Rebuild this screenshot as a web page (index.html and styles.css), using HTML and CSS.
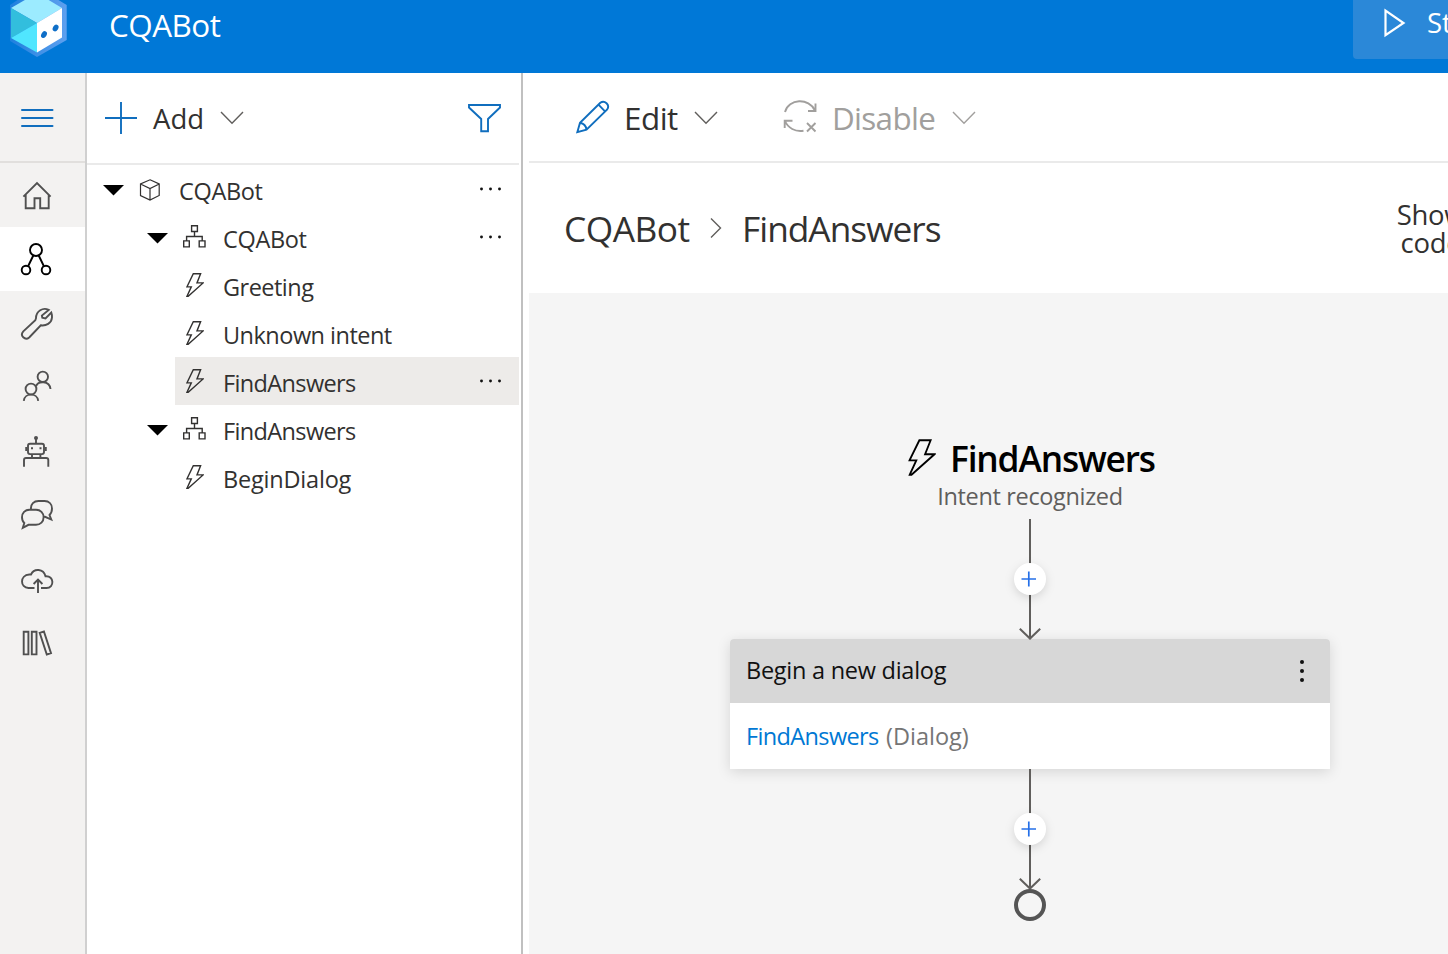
FILE: index.html
```html
<!DOCTYPE html>
<html lang="en">
<head>
<meta charset="utf-8">
<title>CQABot</title>
<link rel="stylesheet" href="styles.css">
</head>
<body>
<svg class="defs" width="0" height="0" aria-hidden="true">
  <symbol id="bolt" viewBox="0 0 18 24"><path d="M7.3 .8H14.6L11 9.900H17.100L2.200 23.200H1L5.300 13.900H.9Z"/></symbol>
  <symbol id="tree" viewBox="0 0 23 23"><path d="M8.6.7h5.8v5.8H8.6zM.7 15.9h5.6v6H.7zM16.2 15.9h5.8v6h-5.8zM11.500 6.500v5M3.600 15.900v-4.400h15.600v4.400"/></symbol>
  <symbol id="caret" viewBox="0 0 21 11"><path d="M0 0H21L10.500 10.500Z"/></symbol>
  <symbol id="chevron" viewBox="0 0 24 14"><path d="M1 1L12 12.300L23 1"/></symbol>
  <symbol id="dots" viewBox="0 0 24 4"><circle cx="2.500" cy="2" r="1.450"/><circle cx="11.500" cy="2" r="1.450"/><circle cx="20.500" cy="2" r="1.450"/></symbol>
</svg>

<header class="topbar">
  <svg class="logo" width="109" height="73" viewBox="0 0 109 73">
    <defs><linearGradient id="edge" x1="0" x2="1"><stop offset="0" stop-color="#1f80de"/><stop offset="1" stop-color="#5ea0ef"/></linearGradient></defs>
    <path fill="url(#edge)" d="M37-13L66.700 5V40L37 57L10 41V5Z"/>
    <path fill="#9cebff" d="M11 8L37-7L62 8L37 23Z"/>
    <path fill="#32bedd" d="M11 8L37 23L11 38Z"/>
    <path fill="#50e6ff" d="M11 38L37 23V52.500Z"/>
    <path fill="#fff" d="M37 23L62 8V37.500L37 52.500Z"/>
    <g fill="#0f6fc8"><ellipse cx="44" cy="34.600" rx="2.600" ry="3.600" transform="rotate(32 44 34.600)"/><ellipse cx="55.600" cy="28" rx="2.600" ry="3.600" transform="rotate(32 55.600 28)"/></g>
  </svg>
  <div class="brand">CQABot</div>
  <div class="start">
    <svg width="74" height="59" viewBox="1353 0 74 59"><path d="M1385.500 10.700V35.200L1403.500 23Z"/></svg>
    <span>Start bot</span>
  </div>
</header>

<div class="workspace">
  <nav class="rail">
    <div class="menu"><svg width="85" height="88" viewBox="0 73 85 88"><path d="M22 110H52.500M22 118H52.500M22 126H52.500"/></svg></div>
    <div class="item"><svg width="85" height="64" viewBox="0 163 85 64"><path d="M23.400 196.700L37 183.200L50.600 196.700M25.700 194.800V208.200H34.500V198.300H40.200V208.200H48.700V194.800"/></svg></div>
    <div class="item active"><svg width="85" height="64" viewBox="0 227 85 64"><circle cx="36" cy="250" r="6"/><circle cx="26" cy="270" r="4.300"/><circle cx="46" cy="270" r="4.300"/><path d="M33.300 255.500L28.200 266M38.700 255.500L43.800 266"/></svg></div>
    <div class="item"><svg width="85" height="64" viewBox="0 291 85 64"><path d="M48.700 309.900C43 307 36 311 36 318.200L35.300 320.300L23.300 331.300C19.500 335.500 25 341 29.200 337.500L40.800 325.300C46 326 51.500 323.500 52 317.500C52.200 315.500 51.800 314 51.300 312.600L45.500 318.400L42.300 317.700L41.900 315.600Z"/></svg></div>
    <div class="item"><svg width="85" height="64" viewBox="0 355 85 64"><circle cx="42.800" cy="376.800" r="5.200"/><circle cx="31" cy="389" r="5.400"/><path d="M23.800 400.800C24.500 392.500 37.500 392.500 38.200 400.800M36 386.300C38 380.500 49.500 380.500 50.500 389"/></svg></div>
    <div class="item"><svg width="85" height="64" viewBox="0 419 85 64"><circle class="fill" cx="36" cy="438" r="2"/><rect x="28" y="443.800" width="16" height="10.300" rx="2"/><path d="M36 438V443.500M26.200 447V451M45.800 447V451M32 454V457.500M40.400 454V457.500M24 466.700V460Q24 458 26 458H46.200Q48.300 458 48.300 460V466.700"/><path d="M31 448.200h2M39.500 448.200h2"/></svg></div>
    <div class="item"><svg width="85" height="64" viewBox="0 483 85 64"><path d="M31 509C30.500 504 34 501 38.500 501H44.500C49 501 52 504 52 508.500C52 511.500 50.800 513.800 49.500 515L51.300 519.500L45 516.800H43.500M29.500 509.800H36C40.500 509.800 43.600 513 43.600 517.300C43.600 521.600 40.500 524.800 36 524.800H28.500L22.800 527.800L24.300 523C22.800 521.800 22 519.500 22 517.300C22 513 25 509.800 29.500 509.800Z"/></svg></div>
    <div class="item"><svg width="85" height="64" viewBox="0 547 85 64"><path d="M34.500 588H28.500C20 588 19.500 575 29.300 574.500H31C34 568 43.500 568.500 45.500 576.300C54.500 575.500 54.500 588 46.500 588H41M38 593V579.500M33.600 584L38 579.500L42.400 584"/></svg></div>
    <div class="item"><svg width="85" height="64" viewBox="0 611 85 64"><path d="M23.700 631.700H28.400V654.400H23.700ZM31.800 631.700H36.500V654.400H31.800ZM39.700 632.800L43.900 631.500L51 653.200L46.800 654.500Z"/></svg></div>
  </nav>

  <aside class="explorer">
    <div class="explorer-bar">
      <svg class="blue" width="66" height="90" viewBox="87 73 66 90"><path d="M121 102V134M105 118H137"/></svg>
      <span class="add">Add</span>
      <svg class="chev" width="24" height="14"><use href="#chevron"/></svg>
      <svg class="blue filter" width="34" height="30" viewBox="468 103 34 30"><path d="M469 105H500V107.500L488 119V131.200H481.200V119L469 107.500Z"/></svg>
    </div>
    <div class="row root"><svg class="caret" width="21" height="11"><use href="#caret"/></svg>
      <svg class="ico cube" width="22" height="22" viewBox="0 0 22 22"><path d="M11 .8L20.200 5V16.500L11 21L1.500 16.500V5ZM1.500 5L11 9.500L20.200 5M11 9.500V21"/></svg>
      <span class="name cqa">CQABot</span><svg class="more" width="24" height="4"><use href="#dots"/></svg></div>
    <div class="row dialog"><svg class="caret" width="21" height="11"><use href="#caret"/></svg><svg class="ico org" width="23" height="23"><use href="#tree"/></svg><span class="name cqa">CQABot</span><svg class="more" width="24" height="4"><use href="#dots"/></svg></div>
    <div class="row trigger"><svg class="ico" width="18" height="24"><use href="#bolt"/></svg><span class="name greeting">Greeting</span></div>
    <div class="row trigger"><svg class="ico" width="18" height="24"><use href="#bolt"/></svg><span class="name unknown">Unknown intent</span></div>
    <div class="row trigger selected"><svg class="ico" width="18" height="24"><use href="#bolt"/></svg><span class="name find">FindAnswers</span><svg class="more" width="24" height="4"><use href="#dots"/></svg></div>
    <div class="row dialog"><svg class="caret" width="21" height="11"><use href="#caret"/></svg><svg class="ico org" width="23" height="23"><use href="#tree"/></svg><span class="name find">FindAnswers</span></div>
    <div class="row trigger"><svg class="ico" width="18" height="24"><use href="#bolt"/></svg><span class="name begin">BeginDialog</span></div>
  </aside>
  <div class="splitter"></div>

  <main class="editor">
    <div class="toolbar">
      <svg class="blue" width="96" height="88" viewBox="529 73 96 88"><path d="M577.300 132.200L580 122.800L600.300 102.800C604.500 99.500 610.500 105 607 109.700L586.500 129.600ZM580 122.800C583.500 123.500 586 126 586.500 129.600M598.500 104.700L605 111.400"/></svg>
      <span class="edit">Edit</span>
      <svg class="chev" width="24" height="14"><use href="#chevron"/></svg>
      <svg class="sync" width="36" height="34" viewBox="783 101 36 34"><path d="M785 113C788.500 99.500 809 98.500 815 111.500M815.500 104.500V112H808M784.700 129V121.700H792.500M785 122C788 129 795 133 803.500 131.700M807 124L815.500 132.500M815.500 124L807 132.500"/></svg>
      <span class="disable">Disable</span>
      <svg class="chev off" width="24" height="14"><use href="#chevron"/></svg>
    </div>
    <div class="crumbs">
      <span class="crumb1">CQABot</span>
      <svg width="12" height="22" viewBox="0 0 12 22"><path d="M1 1.500L10.500 11L1 20.500"/></svg>
      <span class="crumb2">FindAnswers</span>
      <div class="show-code">Show<br>code</div>
    </div>
    <div class="canvas">
      <div class="flow">
        <div class="flow-title"><svg width="28" height="37" viewBox="0 0 18 24"><use href="#bolt"/></svg><span>FindAnswers</span></div>
        <div class="flow-sub">Intent recognized</div>
        <svg class="link" width="80" height="120" viewBox="990 519 80 120">
          <path class="wire" d="M1030 519V638.500M1019.800 628.700L1030 638.500L1040.200 628.700"/>
          <circle class="plus" cx="1030" cy="579" r="16"/><path class="plus-sign" d="M1021.500 579H1036M1028.800 571.500V586.500"/>
        </svg>
        <section class="card">
          <div class="card-head"><span>Begin a new dialog</span><svg width="6" height="24" viewBox="0 0 6 24"><circle cx="3" cy="3" r="2"/><circle cx="3" cy="12" r="2"/><circle cx="3" cy="21" r="2"/></svg></div>
          <div class="card-body"><span class="target">FindAnswers</span><span class="kind">(Dialog)</span></div>
        </section>
        <svg class="link" width="80" height="153" viewBox="990 769 80 153">
          <path class="wire" d="M1030 769V888.500M1019.800 878.700L1030 888.500L1040.200 878.700"/>
          <circle class="plus" cx="1030" cy="829" r="16"/><path class="plus-sign" d="M1021.500 829H1036M1028.800 821.500V836.500"/>
          <circle class="end" cx="1030" cy="905" r="14"/>
        </svg>
      </div>
    </div>
  </main>
</div>
</body>
</html>
```
FILE: styles.css
```css
* { box-sizing: border-box; }
body { margin: 0; width: 1448px; height: 954px; overflow: hidden; background: #fff; color: #323130; font-family: "Open Sans", "Noto Sans", sans-serif; font-size: 23.5px; white-space: nowrap; }
svg { flex: none; display: block; fill: none; stroke: #323130; }
.defs { position: absolute; }

.topbar { display: flex; align-items: flex-start; height: 73px; background: #0078d7; color: #fff; overflow: hidden; }
.logo { stroke: none; }
.brand { font-size: 31.4px; line-height: 50px; letter-spacing: -.5px; }
.start { display: flex; flex: none; width: 95px; height: 59px; margin-left: auto; overflow: hidden; background: #2b88d8; border-bottom-left-radius: 4px; font-size: 27.5px; line-height: 46px; }
.start svg { stroke: #fff; stroke-width: 2.2; }

.workspace { display: flex; height: 881px; }
.rail { flex: none; width: 87px; background: #f3f2f1; border-right: 2px solid #d0d0d0; }
.menu { height: 90px; border-bottom: 2px solid #e1dfdd; }
.menu svg { stroke: #106ebe; stroke-width: 2; stroke-linecap: round; }
.item { height: 64px; }
.item svg { stroke: #505050; stroke-width: 1.9; }
.item .fill { fill: #505050; stroke: none; }
.item.active { background: #fff; }
.item.active svg { stroke: #000; }

.explorer { flex: none; width: 432px; }
.explorer-bar { display: flex; align-items: center; height: 92px; border-bottom: 2px solid #eaeaea; }
.blue { stroke: #106ebe; stroke-width: 1.9; }
.add { width: 67px; font-size: 27.5px; }
.chev { stroke: #605e5c; stroke-width: 1.4; }
.chev.off { stroke: #a19f9d; }
.filter { margin-left: auto; margin-right: 17px; }
.row { display: flex; align-items: center; height: 48px; }
.root { padding-left: 16px; }
.dialog { padding-left: 60px; }
.trigger { margin-left: 88px; padding-left: 11px; }
.selected { background: #edebe9; }
.caret { margin-top: 2px; fill: #000; stroke: none; }
.cube { margin: 2px 18px 0 15px; stroke-width: 1.2; }
.org { margin-left: 15px; margin-right: 17px; margin-top: -2px; stroke-width: 1.4; }
.trigger .ico { margin-right: 19px; margin-top: -1px; stroke-width: 1.4; }
.name { padding-top: 3px; line-height: 48px; }
.cqa { letter-spacing: -.35px; }
.greeting { letter-spacing: -.52px; }
.unknown { letter-spacing: -.51px; }
.find { letter-spacing: -.63px; }
.begin { letter-spacing: -.2px; }
.more { margin-left: auto; margin-right: 16px; fill: #111; stroke: none; }
.splitter { flex: none; width: 4px; border-left: 2px solid #fff; background: #c0c0c0; }

.editor { flex: 1; min-width: 0; margin-left: 6px; overflow: hidden; }
.toolbar { display: flex; align-items: center; height: 90px; border-bottom: 2px solid #eaeaea; font-size: 31.4px; line-height: 86px; }
.toolbar span { padding-top: 2px; }
.toolbar .chev { margin-top: 1px; }
.edit { width: 70px; margin-left: -1px; letter-spacing: -.5px; }
.sync { margin-left: 65px; stroke: #a19f9d; stroke-width: 1.9; }
.disable { width: 120px; margin-left: 13px; letter-spacing: -.68px; color: #a19f9d; }
.crumbs { display: flex; align-items: center; height: 130px; padding-left: 35px; font-size: 35.3px; }
.crumb1 { width: 146px; letter-spacing: -.5px; }
.crumb2 { margin-left: 20px; letter-spacing: -1px; }
.crumbs svg { stroke: #605e5c; stroke-width: 1.4; }
.show-code { flex: none; width: 70px; margin: 2px -18px 0 auto; font-size: 27.5px; line-height: 28px; letter-spacing: -.3px; text-align: center; }

.canvas { height: 661px; padding: 141px 0 0 201px; background: #f5f5f5; }
.flow { display: flex; flex-direction: column; align-items: center; width: 600px; }
.flow-title { display: flex; align-self: flex-start; height: 48px; padding-left: 178px; line-height: 49px; font-size: 35.3px; font-weight: 600; letter-spacing: -1.15px; color: #000; }
.flow-title svg { margin: 5px 14px 0 0; stroke: #000; stroke-width: 1.2; }
.flow-sub { height: 28px; margin-bottom: 9px; line-height: 29px; letter-spacing: -.35px; color: #605e5c; }
.link { position: relative; overflow: visible; }
.wire { stroke: #605e5c; stroke-width: 2; }
.plus { fill: #fff; stroke: none; filter: drop-shadow(0 3px 5px rgba(0, 0, 0, .13)); }
.plus-sign { stroke: #2670e8; stroke-width: 1.7; }
.end { stroke: #555; stroke-width: 4; }
.card { width: 600px; border-radius: 4px 4px 0 0; background: #fff; box-shadow: 0 3px 14px rgba(0, 0, 0, .13); }
.card-head { display: flex; align-items: center; justify-content: space-between; height: 64px; padding: 0 25px 0 16px; border-radius: 4px 4px 0 0; background: #d7d7d7; color: #111; line-height: 63px; letter-spacing: -.26px; }
.card-head span { height: 64px; }
.card-head svg { fill: #111; stroke: none; }
.card-body { display: flex; height: 66px; padding-left: 16px; line-height: 67px; }
.target { width: 140px; letter-spacing: -.63px; color: #0078d4; }
.kind { color: #757575; }
```
